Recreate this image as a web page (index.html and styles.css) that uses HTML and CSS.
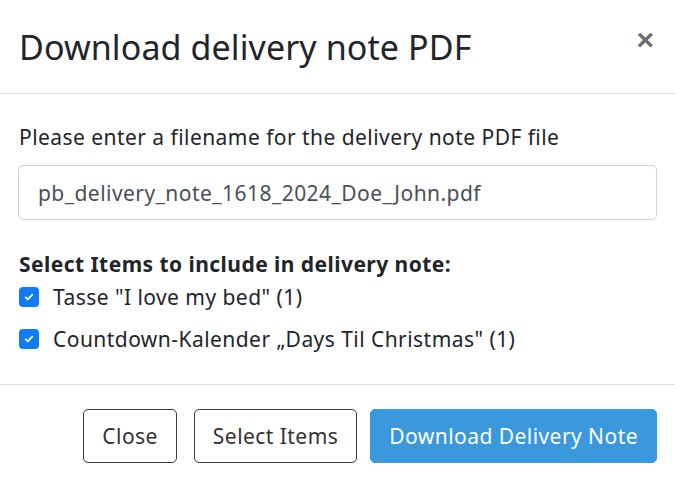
FILE: index.html
```html
<!DOCTYPE html>
<html>
<head>
<meta charset="utf-8">
<link rel="stylesheet" href="styles.css">
</head>
<body>
<div class="modal">
  <div class="modal-header">
    <h4 class="modal-title">Download delivery note PDF</h4>
    <button class="close" type="button">&times;</button>
  </div>
  <div class="modal-body">
    <label class="field-label">Please enter a filename for the delivery note PDF file</label>
    <input class="form-control" type="text" value="pb_delivery_note_1618_2024_Doe_John.pdf">
    <div class="section-title">Select Items to include in delivery note:</div>
    <label class="check-row">
      <span class="checkbox"><svg viewBox="0 0 20 20" width="12" height="12"><path d="M4.5 10.5l3.5 3.5 7.5-8" fill="none" stroke="#fff" stroke-width="3" stroke-linecap="round" stroke-linejoin="round"/></svg></span>
      <span class="check-text">Tasse "I love my bed" (1)</span>
    </label>
    <label class="check-row">
      <span class="checkbox"><svg viewBox="0 0 20 20" width="12" height="12"><path d="M4.5 10.5l3.5 3.5 7.5-8" fill="none" stroke="#fff" stroke-width="3" stroke-linecap="round" stroke-linejoin="round"/></svg></span>
      <span class="check-text">Countdown-Kalender „Days Til Christmas" (1)</span>
    </label>
  </div>
  <div class="modal-footer">
    <button class="btn btn-outline btn-close" type="button">Close</button>
    <button class="btn btn-outline btn-select" type="button">Select Items</button>
    <button class="btn btn-primary" type="button">Download Delivery Note</button>
  </div>
</div>
</body>
</html>
```
FILE: styles.css
```css
html, body {
  margin: 0;
  padding: 0;
  background: #fff;
}
body {
  font-family: "Noto Sans", "Open Sans", sans-serif;
  color: #212529;
  width: 675px;
  height: 481px;
  overflow: hidden;
}
.modal {
  display: flex;
  flex-direction: column;
}
.modal-header {
  height: 94px;
  border-bottom: 1px solid #dee2e6;
  display: flex;
  align-items: center;
  justify-content: space-between;
  padding: 0 21px 0 19px;
  box-sizing: border-box;
}
.modal-title {
  margin: 0;
  font-size: 34px;
  font-weight: 400;
  line-height: 40px;
  letter-spacing: 0.1px;
  color: #212529;
}
.close {
  border: 0;
  background: none;
  padding: 0;
  margin-top: -14px;
  font-size: 30px;
  font-weight: 700;
  color: #6b6b6b;
  line-height: 1;
  font-family: "Liberation Sans", sans-serif;
}
.modal-body {
  padding: 28px 18px 30px 18px;
  display: flex;
  flex-direction: column;
  border-bottom: 1px solid #dee2e6;
  font-size: 21px;
  letter-spacing: 0.45px;
}
.field-label {
  line-height: 30px;
  padding-left: 1px;
}
.form-control {
  margin-top: 13px;
  height: 55px;
  box-sizing: border-box;
  border: 1px solid #ced4da;
  border-radius: 5px;
  padding: 0 19px;
  font-family: inherit;
  font-size: 21px;
  letter-spacing: 0.45px;
  color: #495057;
  outline: none;
}
.section-title {
  margin-top: 29px;
  line-height: 30px;
  font-weight: 700;
  padding-left: 1px;
}
.check-row {
  display: flex;
  align-items: center;
  margin-top: 3px;
  height: 30px;
}
.check-row + .check-row {
  margin-top: 12px;
}
.checkbox {
  width: 20px;
  height: 20px;
  margin-left: 1px;
  border-radius: 4px;
  background: #0f7cf6;
  display: flex;
  align-items: center;
  justify-content: center;
  flex: none;
}
.check-text {
  margin-left: 14px;
  line-height: 30px;
}
.modal-footer {
  display: flex;
  justify-content: flex-end;
  padding: 24px 18px 0 18px;
}
.btn {
  height: 54px;
  box-sizing: border-box;
  border-radius: 5px;
  font-family: inherit;
  font-size: 21px;
  letter-spacing: 0.45px;
  padding: 0 18px;
  cursor: pointer;
}
.btn-close {
  margin-right: 17px;
}
.btn-select {
  margin-right: 13px;
}
.btn-outline {
  background: #fff;
  border: 1px solid #3a3a3a;
  color: #333;
}
.btn-primary {
  background: #3a99dc;
  border: 1px solid #3a99dc;
  color: #fff;
}
```
